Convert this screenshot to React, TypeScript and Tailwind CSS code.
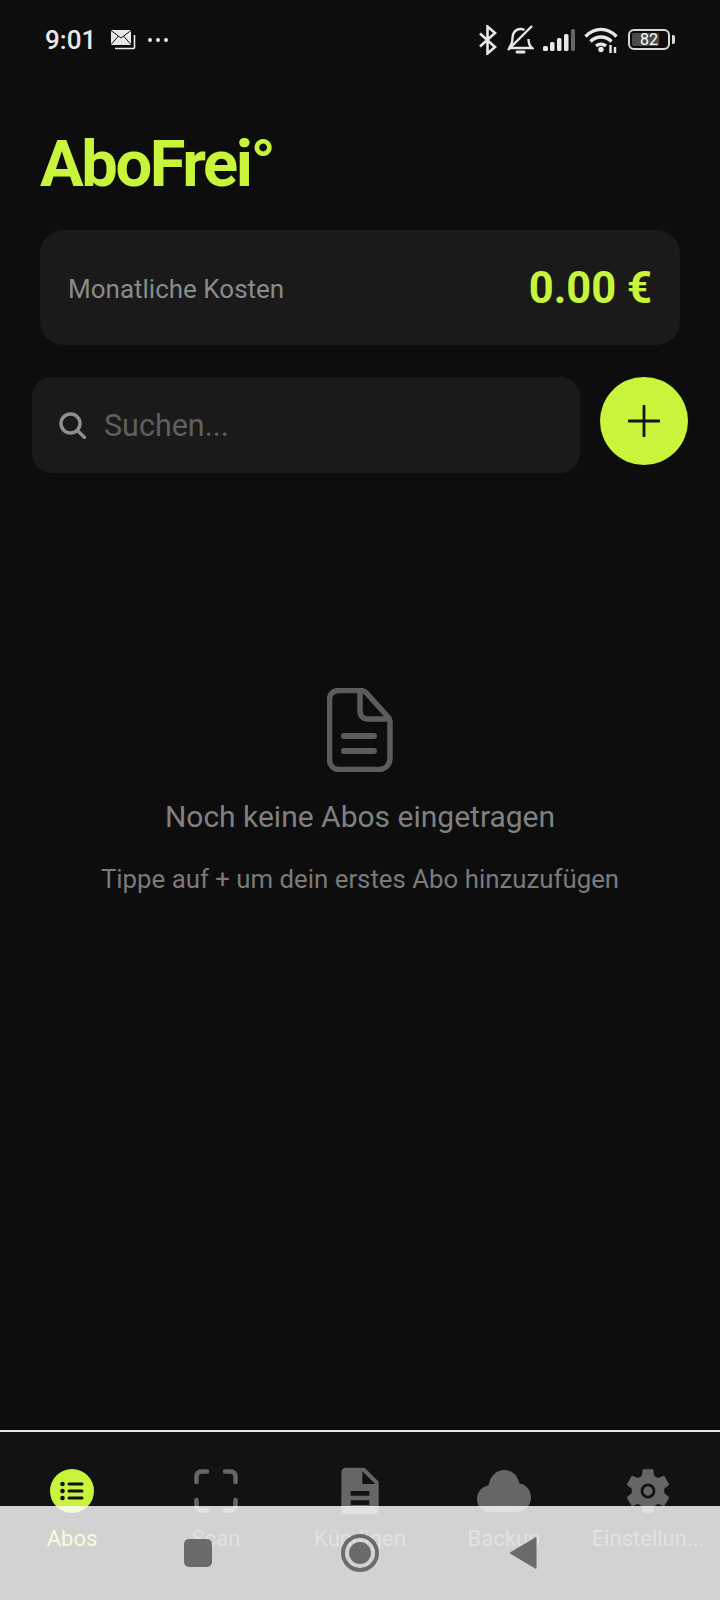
import { MdDescription } from "react-icons/md";

const lime = "#c8f53c";

function StatusBar() {
  return (
    <div className="flex h-[78px] items-center justify-between pl-[45px] pr-[45px] pt-[1px] text-[#e8e8e8]">
      <div className="flex items-center">
        <span className="text-[26px] font-medium leading-none">9:01</span>
        <svg className="ml-[14px]" width="26" height="22" viewBox="0 0 26 22">
          <path d="M5 19.500h18.500a1 1 0 0 0 1-1V6" fill="none" stroke="#e8e8e8" strokeWidth="1.600" />
          <rect x="1" y="1" width="20" height="15" rx="1" fill="#e8e8e8" />
          <path d="M1 1.500l10 7.500 10-7.500M1 15.500l7.500-8.500M21 15.500l-7.500-8.500" fill="none" stroke="#111" strokeWidth="1" />
        </svg>
        <div className="ml-[12px] flex gap-[4px]">
          <div className="h-[4px] w-[4px] rounded-full bg-[#e8e8e8]" />
          <div className="h-[4px] w-[4px] rounded-full bg-[#e8e8e8]" />
          <div className="h-[4px] w-[4px] rounded-full bg-[#e8e8e8]" />
        </div>
      </div>
      <div className="flex items-center">
        <svg width="20" height="30" viewBox="0 0 20 30" fill="none" stroke="#e8e8e8" strokeWidth="2.600">
          <path d="M2 8.500l15 13.500-7.500 6.500V1.500L17 8 2 21.500" />
        </svg>
        <svg className="ml-[9px]" width="27" height="30" viewBox="0 0 27 30" fill="none" stroke="#e8e8e8" strokeWidth="2.400">
          <path d="M2 23h23c-3-2.500-3.500-5.500-3.500-9M17.500 5c-1.400-.8-2.800-1-4-1-5 0-8 4-8 9 0 4-1 7-3.500 10" />
          <path d="M1 25L25 1" />
          <path d="M10 27h7" strokeWidth="3" strokeLinecap="round" />
        </svg>
        <svg className="ml-[9px]" width="32" height="22" viewBox="0 0 32 22" fill="#e8e8e8">
          <rect x="0" y="17" width="5" height="5" rx="1.500" />
          <rect x="7" y="13" width="4.500" height="9" rx="1.500" />
          <rect x="14" y="9" width="4.500" height="13" rx="1.500" />
          <rect x="21" y="5" width="4.500" height="17" rx="1.500" />
          <rect x="28" y="0" width="4" height="22" rx="1.500" fill="#666" />
        </svg>
        <svg className="ml-[9px]" width="34" height="26" viewBox="0 0 34 26" fill="none" stroke="#e8e8e8" strokeWidth="3.400">
          <path d="M1.500 9.500c9-9.500 22-9.500 31 0" />
          <path d="M6.500 14.500c6-6 15-6 21 0" />
          <path d="M12 19c3-2.500 7-2.500 10 0" />
          <circle cx="17" cy="22.500" r="2.700" fill="#e8e8e8" stroke="none" />
          <path d="M26.500 18v8M31 20v6" strokeWidth="2.400" />
        </svg>
        <div className="relative ml-[10px] flex h-[21px] w-[42px] items-center rounded-[6px] border-2 border-[#d8d8d8] p-[2px]">
          <div className="h-full w-[78%] rounded-[2px] bg-[#4a4a4a]" />
          <span className="absolute inset-0 flex items-center justify-center text-[16px] font-normal leading-none text-white">
            82
          </span>
        </div>
        <div className="ml-[2px] h-[9px] w-[3px] rounded-r-[2px] bg-[#d8d8d8]" />
      </div>
    </div>
  );
}

function NavItem({ label, active, children }: { label: string; active?: boolean; children: React.ReactNode }) {
  return (
    <div className="flex w-[144px] flex-col items-center">
      <div className="flex h-[52px] items-center justify-center">{children}</div>
      <span
        className={`mt-[8px] text-[22px] leading-[28px] ${active ? "text-[#c8f53c]" : "text-[#666666]"}`}
      >
        {label}
      </span>
    </div>
  );
}

export default function App() {
  return (
    <div
      className="relative flex h-[1600px] w-[720px] flex-col overflow-hidden bg-[#0d0d0d]"
      style={{ fontFamily: "Roboto, sans-serif" }}
    >
      <StatusBar />

      <h1
        className="ml-[40px] mt-[49px] text-[65px] font-bold leading-[75px] tracking-[-2.400px]"
        style={{ color: lime }}
      >
        AboFrei°
      </h1>

      <div className="mx-[40px] mt-[28px] flex h-[115px] items-center justify-between rounded-[24px] bg-[#1a1a1a] px-[28px] pt-[3px]">
        <span className="text-[26px] text-[#8a8a8a]">Monatliche Kosten</span>
        <span className="text-[43.500px] font-bold leading-none" style={{ color: lime }}>
          0.00 €
        </span>
      </div>

      <div className="ml-[32px] mt-[32px] flex items-start">
        <div className="flex h-[96px] w-[548px] items-center rounded-[20px] bg-[#1a1a1a] pl-[27px]">
          <svg width="27" height="27" viewBox="0 0 27 27" fill="none" stroke="#8f8f8f" strokeWidth="3.400">
            <circle cx="11.500" cy="11.500" r="9.500" />
            <path d="M18.500 18.500l7 7" strokeLinecap="round" />
          </svg>
          <span className="ml-[18px] pt-[2px] text-[30.500px] text-[#5f5f5f]">Suchen...</span>
        </div>
        <div
          className="ml-[20px] flex h-[88px] w-[88px] items-center justify-center rounded-full"
          style={{ backgroundColor: lime }}
        >
          <svg width="32" height="32" viewBox="0 0 32 32" fill="none" stroke="#141414" strokeWidth="2.800">
            <path d="M16 1v30M1 16h30" strokeLinecap="round" />
          </svg>
        </div>
      </div>

      <div className="mt-[215px] flex flex-col items-center">
        <svg width="66" height="84" viewBox="0 0 66 84" fill="none" stroke="#5c5c5c" strokeWidth="5.500">
          <path
            d="M12 2.500h22c2 0 3.500.6 5 2l22.500 25c1 1.200 1.500 2.500 1.500 4V70c0 6-4 11.500-11 11.500H12C6 81.500 2.500 77 2.500 71V12C2.500 6 6 2.500 12 2.500Z"
            strokeLinejoin="round"
          />
          <path d="M33 3v20c0 5 3 8 8 8h21" />
          <path d="M17 48h30M17 63h30" strokeWidth="6" strokeLinecap="round" />
        </svg>
        <p className="mt-[27px] text-[30px] leading-[36px] text-[#808080]">Noch keine Abos eingetragen</p>
        <p className="mt-[26px] text-[25.800px] leading-[36px] text-[#7a7a7a]">
          Tippe auf + um dein erstes Abo hinzuzufügen
        </p>
      </div>

      <div className="absolute inset-x-0 bottom-0 top-[1430px] border-t-2 border-[#e6e6e6] bg-[#121212] pt-[33px]">
        <div className="flex">
          <NavItem label="Abos" active>
            <div
              className="flex h-[44px] w-[44px] items-center justify-center rounded-full"
              style={{ backgroundColor: lime }}
            >
              <svg width="24" height="20" viewBox="0 0 24 20" fill="#111">
                <circle cx="2.500" cy="3" r="2.300" />
                <circle cx="2.500" cy="10" r="2.300" />
                <circle cx="2.500" cy="17" r="2.300" />
                <rect x="7.500" y="1.500" width="16" height="3" rx="1.500" />
                <rect x="7.500" y="8.500" width="16" height="3" rx="1.500" />
                <rect x="7.500" y="15.500" width="16" height="3" rx="1.500" />
              </svg>
            </div>
          </NavItem>
          <NavItem label="Scan">
            <svg width="44" height="44" viewBox="0 0 44 44" fill="none" stroke="#666" strokeWidth="4.500" strokeLinecap="round">
              <path d="M2.500 13V8c0-3.500 2-5.500 5.500-5.500h5M31 2.500h5c3.500 0 5.500 2 5.500 5.500v5M41.500 31v5c0 3.500-2 5.500-5.500 5.500h-5M13 41.500H8c-3.500 0-5.500-2-5.500-5.500v-5" />
            </svg>
          </NavItem>
          <NavItem label="Kündigen">
            <MdDescription className="text-[#666666]" size={56} />
          </NavItem>
          <NavItem label="Backup">
            <svg width="54" height="42" viewBox="0 0 54 42">
              <path
                fill="#666"
                d="M27 0c8 0 14 5.500 15.500 13.500C49 14 54 20 54 27.500 54 35.500 48 42 40 42H12C5 42 0 36 0 29 0 22 5 16.500 11.500 15.500 13 6.500 19 0 27 0Z"
              />
            </svg>
          </NavItem>
          <NavItem label="Einstellun...">
            <svg width="52" height="52" viewBox="0 0 24 24">
              <path
                fill="#666"
                d="M19.43,12.97C19.47,12.65 19.5,12.33 19.5,12C19.5,11.67 19.47,11.34 19.43,11L21.54,9.37C21.73,9.22 21.78,8.95 21.66,8.73L19.66,5.27C19.54,5.05 19.27,4.96 19.05,5.05L16.56,6.05C16.04,5.66 15.5,5.32 14.87,5.07L14.5,2.42C14.46,2.18 14.25,2 14,2H10C9.75,2 9.54,2.18 9.5,2.42L9.13,5.07C8.5,5.32 7.96,5.66 7.44,6.05L4.95,5.05C4.73,4.96 4.46,5.05 4.34,5.27L2.34,8.73C2.21,8.95 2.27,9.22 2.46,9.37L4.57,11C4.53,11.34 4.5,11.67 4.5,12C4.5,12.33 4.53,12.65 4.57,12.97L2.46,14.63C2.27,14.78 2.21,15.05 2.34,15.27L4.34,18.73C4.46,18.95 4.73,19.03 4.95,18.95L7.44,17.94C7.96,18.34 8.5,18.68 9.13,18.93L9.5,21.58C9.54,21.82 9.75,22 10,22H14C14.25,22 14.46,21.82 14.5,21.58L14.87,18.93C15.5,18.67 16.04,18.34 16.56,17.94L19.05,18.95C19.27,19.03 19.54,18.95 19.66,18.73L21.66,15.27C21.78,15.05 21.73,14.78 21.54,14.63L19.43,12.97Z"
              />
              <circle cx="12" cy="12" r="2.800" fill="#666" stroke="#111" strokeWidth="1.300" />
            </svg>
          </NavItem>
        </div>
      </div>

      <div className="absolute inset-x-0 bottom-0 flex h-[94px] items-start bg-white/[0.81] pt-[33px]">
        <div className="ml-[184px] h-[28px] w-[28px] rounded-[5px] bg-[#6b6b6b]" />
        <div className="ml-[129px] mt-[-5px] flex h-[38px] w-[38px] items-center justify-center rounded-full border-[4px] border-[#6b6b6b]">
          <div className="h-[22px] w-[22px] rounded-full bg-[#6b6b6b]" />
        </div>
        <svg className="ml-[130px] mt-[-3px]" width="28" height="34" viewBox="0 0 28 34">
          <path d="M1 17L27 1.500v31z" fill="#6b6b6b" stroke="#6b6b6b" strokeWidth="1" strokeLinejoin="round" />
        </svg>
      </div>
    </div>
  );
}
